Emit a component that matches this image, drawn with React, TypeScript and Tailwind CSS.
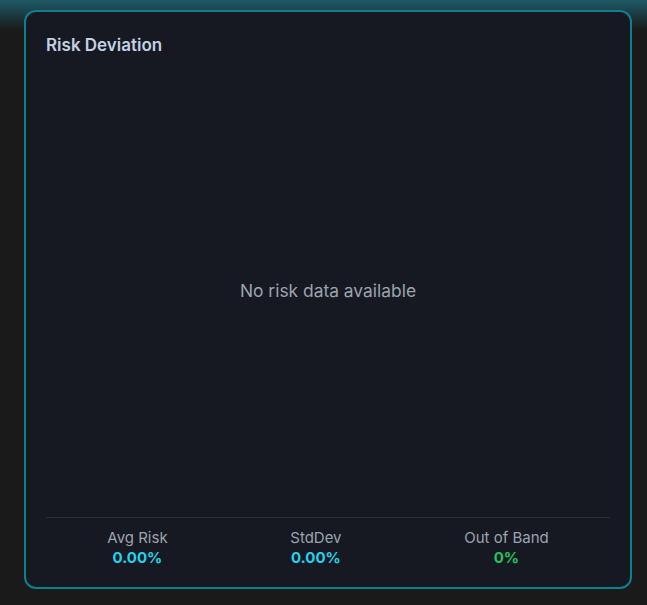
import React from "react";

export default function App() {
  return (
    <div className="min-h-[605px] w-full bg-[#1a1a1a] overflow-hidden" style={{ fontFamily: "Inter, 'Noto Sans', sans-serif" }}>
      <div className="relative h-[605px] w-full">
        <div className="absolute left-0 right-0 top-0 h-[30px] bg-gradient-to-b from-[#1d5a66] to-transparent" />
        <div className="relative ml-6 mt-2.5 inline-flex h-[579px] w-[608px] flex-col rounded-xl border-2 border-[#0e7f91] bg-[#161921] p-5">
          <h2 className="text-[17px] font-semibold leading-[26px] text-[#c3d0e4]">Risk Deviation</h2>
          <div className="flex flex-1 items-center justify-center pt-[8px]">
            <p className="text-[17.4px] text-[#9ca3af]">No risk data available</p>
          </div>
          <div className="flex justify-around border-t border-[#233039] pt-2.5">
            <div className="flex flex-col items-center">
              <span className="text-[15px] leading-5 text-[#9ca3af]">Avg Risk</span>
              <span className="text-[15px] font-bold leading-[19px] text-[#22d3ee]">0.00%</span>
            </div>
            <div className="flex flex-col items-center">
              <span className="text-[15px] leading-5 text-[#9ca3af]">StdDev</span>
              <span className="text-[15px] font-bold leading-[19px] text-[#22d3ee]">0.00%</span>
            </div>
            <div className="flex flex-col items-center">
              <span className="text-[15px] leading-5 text-[#9ca3af]">Out of Band</span>
              <span className="text-[15px] font-bold leading-[19px] text-[#22c55e]">0%</span>
            </div>
          </div>
        </div>
      </div>
    </div>
  );
}
